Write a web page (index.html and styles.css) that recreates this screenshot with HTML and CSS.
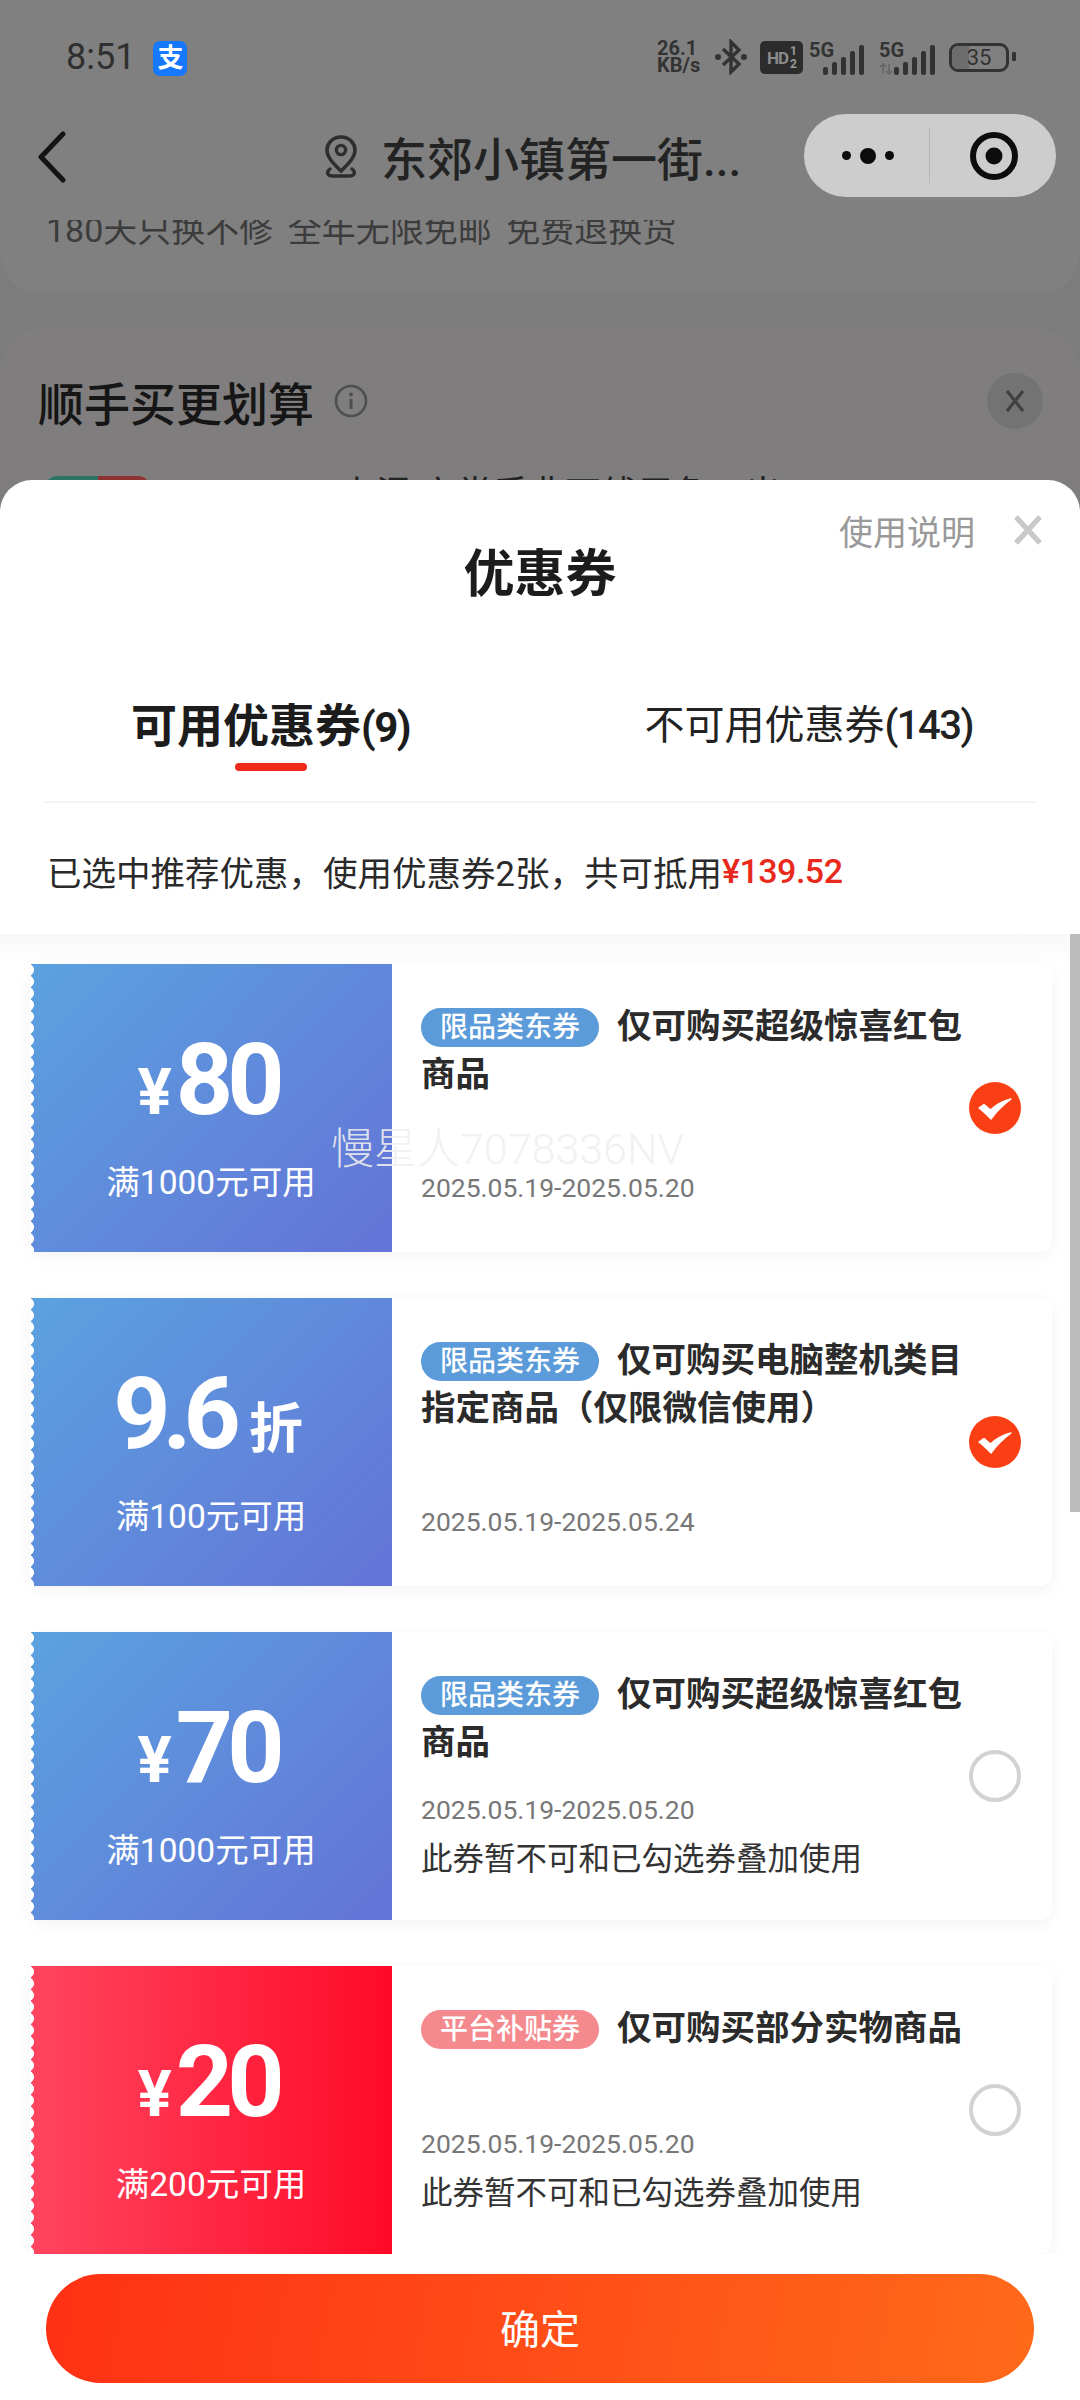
FILE: index.html
```html
<!DOCTYPE html>
<html lang="zh-CN">
<head>
    <meta charset="UTF-8">
    <meta name="viewport" content="width=device-width, initial-scale=1.0">
    <title>优惠券</title>
    <link rel="stylesheet" href="styles.css">
</head>
<body>
<div class="page">

    <!-- dimmed page behind the sheet -->
    <div class="backdrop">
        <div class="status-bar">
            <div class="status-left">
                <span class="clock">8:51</span>
                <span class="pay-icon">支</span>
            </div>
            <div class="status-right">
                <span class="net-speed">26.1<br>KB/s</span>
                <svg class="bt-icon" width="32" height="36" viewBox="0 0 32 36">
                    <path d="M8 10 L24 25 L16 33 V3 L24 11 L8 26" fill="none" stroke="#333" stroke-width="3.4"/>
                    <circle cx="3" cy="18" r="3" fill="#333"/>
                    <circle cx="29" cy="18" r="3" fill="#333"/>
                </svg>
                <span class="hd-badge">HD<span class="hd-sims">1<br>2</span></span>
                <span class="signal">
                    <span class="signal-label">5G</span>
                    <svg width="42" height="30" viewBox="0 0 42 30">
                        <rect x="0" y="22" width="5" height="8" rx="2" fill="#333"/>
                        <rect x="9" y="17" width="5" height="13" rx="2" fill="#333"/>
                        <rect x="18" y="12" width="5" height="18" rx="2" fill="#333"/>
                        <rect x="27" y="6" width="5" height="24" rx="2" fill="#333"/>
                        <rect x="36" y="0" width="5" height="30" rx="2" fill="#333"/>
                    </svg>
                </span>
                <span class="signal signal-second">
                    <span class="signal-label">5G</span>
                    <svg width="56" height="30" viewBox="0 0 56 30">
                        <path d="M4 29 V19 M1 22 L4 19 L7 22 M10 19 V29 M7 26 L10 29 L13 26" fill="none" stroke="#666" stroke-width="1.6"/>
                        <rect x="15" y="22" width="5" height="8" rx="2" fill="#333"/>
                        <rect x="24" y="17" width="5" height="13" rx="2" fill="#333"/>
                        <rect x="33" y="12" width="5" height="18" rx="2" fill="#333"/>
                        <rect x="42" y="6" width="5" height="24" rx="2" fill="#333"/>
                        <rect x="51" y="0" width="5" height="30" rx="2" fill="#333"/>
                    </svg>
                </span>
                <span class="battery"><span class="battery-level"></span><span class="battery-text">35</span></span>
                <span class="battery-tip"></span>
            </div>
        </div>

        <div class="nav-bar">
            <svg class="back-icon" width="30" height="52" viewBox="0 0 30 52">
                <path d="M26 3 L4 26 L26 49" fill="none" stroke="#141414" stroke-width="5" stroke-linecap="round" stroke-linejoin="round"/>
            </svg>
            <div class="nav-title">
                <svg width="36" height="44" viewBox="0 0 36 44">
                    <path d="M18 3 C9 3 4 10 4 16 C4 24 12 31 18 37 C24 31 32 24 32 16 C32 10 27 3 18 3 Z" fill="none" stroke="#2e2e2e" stroke-width="3.6"/>
                    <circle cx="18" cy="16" r="4.6" fill="none" stroke="#2e2e2e" stroke-width="3.4"/>
                    <path d="M7 35 C3 38 4 42 10 42 H26 C32 42 33 38 29 35" fill="none" stroke="#2e2e2e" stroke-width="3.4" stroke-linecap="round"/>
                </svg>
                <span>东郊小镇第一街...</span>
            </div>
            <div class="capsule">
                <div class="capsule-more">
                    <i class="dot"></i><i class="dot dot-big"></i><i class="dot"></i>
                </div>
                <div class="capsule-line"></div>
                <div class="capsule-close">
                    <svg width="52" height="52" viewBox="0 0 52 52">
                        <circle cx="26" cy="26" r="21" fill="none" stroke="#0c0c0c" stroke-width="6"/>
                        <circle cx="26" cy="26" r="8.5" fill="#0c0c0c"/>
                    </svg>
                </div>
            </div>
        </div>

        <div class="store-card">
            <p class="store-perks">180天只换不修 全年无限免邮 免费退换货</p>
        </div>

        <div class="upsell-card">
            <div class="upsell-head">
                <span class="upsell-title">顺手买更划算</span>
                <svg class="info-icon" width="34" height="34" viewBox="0 0 34 34">
                    <circle cx="17" cy="17" r="15" fill="none" stroke="#4e4e4e" stroke-width="2.6"/>
                    <circle cx="17" cy="10.5" r="2" fill="#4e4e4e"/>
                    <path d="M17 15 V25" stroke="#4e4e4e" stroke-width="3"/>
                </svg>
                <span class="upsell-close">
                    <svg width="22" height="26" viewBox="0 0 22 26">
                        <path d="M3 3 L19 23 M19 3 L3 23" stroke="#3f3f3f" stroke-width="3"/>
                    </svg>
                </span>
            </div>
            <div class="upsell-item">
                <div class="upsell-thumb"><i></i><i></i></div>
                <span class="upsell-name">上混 六党手非丁线用色一出</span>
            </div>
        </div>
    </div>

    <!-- coupon sheet -->
    <div class="sheet">
        <div class="sheet-head">
            <h1 class="sheet-title">优惠券</h1>
            <div class="sheet-actions">
                <span class="sheet-help">使用说明</span>
                <svg width="28" height="30" viewBox="0 0 28 30">
                    <path d="M2 2 L26 28 M26 2 L2 28" stroke="#c9c9c9" stroke-width="5.4"/>
                </svg>
            </div>
        </div>

        <div class="tabs">
            <div class="tab tab-active">
                <span>可用优惠券<span class="tab-count">(9)</span></span>
                <i class="tab-line"></i>
            </div>
            <div class="tab">
                <span>不可用优惠券<span class="tab-count">(143)</span></span>
            </div>
        </div>

        <p class="summary">已选中推荐优惠，使用优惠券2张，共可抵用<span class="summary-money">¥139.52</span></p>

        <div class="coupon-list">
            <div class="coupon">
                <div class="coupon-left">
                    <div class="amount"><span class="yen">¥</span><span class="num">80</span></div>
                    <div class="limit">满1000元可用</div>
                </div>
                <div class="coupon-right">
                    <div class="coupon-info">
                        <div class="coupon-name"><span class="badge">限品类东券</span>仅可购买超级惊喜红包商品</div>
                        <div class="coupon-meta">
                            <div class="coupon-date">2025.05.19-2025.05.20</div>
                        </div>
                    </div>
                    <svg class="check" width="52" height="52" viewBox="0 0 52 52">
                        <circle cx="26" cy="26" r="26" fill="#fb3f14"/>
                        <path d="M10 26 L15 22.5 L21.5 28 C27 23 34 19 42 17 C34 23 27 30 22 37 C18 33 14 29 10 26 Z" fill="#fff" stroke="#fff" stroke-width="1.4" stroke-linejoin="round"/>
                    </svg>
                </div>
            </div>

            <div class="coupon">
                <div class="coupon-left">
                    <div class="amount"><span class="num num-rate">9.6</span><span class="discount">折</span></div>
                    <div class="limit">满100元可用</div>
                </div>
                <div class="coupon-right">
                    <div class="coupon-info">
                        <div class="coupon-name"><span class="badge">限品类东券</span>仅可购买电脑整机类目指定商品（仅限微信使用）</div>
                        <div class="coupon-meta">
                            <div class="coupon-date">2025.05.19-2025.05.24</div>
                        </div>
                    </div>
                    <svg class="check" width="52" height="52" viewBox="0 0 52 52">
                        <circle cx="26" cy="26" r="26" fill="#fb3f14"/>
                        <path d="M10 26 L15 22.5 L21.5 28 C27 23 34 19 42 17 C34 23 27 30 22 37 C18 33 14 29 10 26 Z" fill="#fff" stroke="#fff" stroke-width="1.4" stroke-linejoin="round"/>
                    </svg>
                </div>
            </div>

            <div class="coupon">
                <div class="coupon-left">
                    <div class="amount"><span class="yen">¥</span><span class="num">70</span></div>
                    <div class="limit">满1000元可用</div>
                </div>
                <div class="coupon-right">
                    <div class="coupon-info">
                        <div class="coupon-name"><span class="badge">限品类东券</span>仅可购买超级惊喜红包商品</div>
                        <div class="coupon-meta">
                            <div class="coupon-date">2025.05.19-2025.05.20</div>
                            <div class="coupon-note">此券暂不可和已勾选券叠加使用</div>
                        </div>
                    </div>
                    <span class="radio"></span>
                </div>
            </div>

            <div class="coupon coupon-red">
                <div class="coupon-left">
                    <div class="amount"><span class="yen">¥</span><span class="num">20</span></div>
                    <div class="limit">满200元可用</div>
                </div>
                <div class="coupon-right">
                    <div class="coupon-info">
                        <div class="coupon-name"><span class="badge">平台补贴券</span>仅可购买部分实物商品</div>
                        <div class="coupon-meta">
                            <div class="coupon-date">2025.05.19-2025.05.20</div>
                            <div class="coupon-note">此券暂不可和已勾选券叠加使用</div>
                        </div>
                    </div>
                    <span class="radio"></span>
                </div>
            </div>

            <div class="scrollbar"></div>
        </div>

        <div class="sheet-footer">
            <button class="confirm-btn">确定</button>
        </div>
    </div>

    <div class="watermark">慢星人7078336NV</div>
</div>
</body>
</html>
```

FILE: styles.css
```css
* {
    box-sizing: border-box;
}

body {
    margin: 0;
    font-family: Roboto, "Noto Sans CJK SC", sans-serif;
    color: #333;
    background: #7e7e7e;
}

.page {
    position: relative;
    width: 1080px;
    height: 2400px;
    overflow: hidden;
}

/* backdrop */
.backdrop {
    height: 512px;
    overflow: hidden;
    background: #7c7c7c;
}

.status-bar {
    display: flex;
    justify-content: space-between;
    height: 114px;
    padding: 37px 64px 0 66px;
    background: #808080;
}

.status-left {
    display: flex;
    align-items: flex-start;
    gap: 18px;
}

.clock {
    margin-top: 1px;
    font-size: 36px;
    line-height: 38px;
    color: #2f2f2f;
}

.pay-icon {
    width: 34px;
    height: 35px;
    margin-top: 4px;
    border-radius: 7px;
    background: #1677ff;
    color: #fff;
    font-size: 26px;
    font-weight: 700;
    line-height: 34px;
    text-align: center;
}

.status-right {
    display: flex;
    align-items: flex-start;
    color: #333;
}

.net-speed {
    width: 58px;
    margin-top: 3px;
    font-size: 20px;
    font-weight: 700;
    line-height: 17px;
}

.bt-icon {
    margin: 2px 0 0 0;
}

.hd-badge {
    display: flex;
    align-items: center;
    justify-content: center;
    width: 43px;
    height: 33px;
    margin: 4px 0 0 13px;
    border-radius: 5px;
    background: #2c2c2c;
    color: #8a8a8a;
    font-size: 17px;
    font-weight: 700;
    letter-spacing: -1px;
}

.hd-sims {
    margin-left: 2px;
    font-size: 12px;
    line-height: 13px;
    text-align: center;
    color: #999;
}

.signal {
    position: relative;
    display: block;
    width: 56px;
    height: 36px;
    margin: 4px 0 0 6px;
    text-align: right;
}

.signal svg {
    position: absolute;
    right: 0;
    bottom: 2px;
    display: block;
}

.signal-label {
    position: absolute;
    left: 0;
    top: 0;
    font-size: 20px;
    font-weight: 700;
    line-height: 18px;
}

.signal-second {
    margin-left: 14px;
}

.battery {
    position: relative;
    display: block;
    width: 60px;
    height: 29px;
    margin: 6px 0 0 14px;
    border: 3px solid #333;
    border-radius: 9px;
    overflow: hidden;
}

.battery-level {
    position: absolute;
    left: 0;
    top: 0;
    bottom: 0;
    width: 32%;
    background: #6d6d6d;
}

.battery-text {
    position: relative;
    display: block;
    font-size: 22px;
    line-height: 23px;
    text-align: center;
    color: #333;
}

.battery-tip {
    width: 4px;
    height: 9px;
    margin: 15px 0 0 3px;
    border-radius: 1px;
    background: #333;
}

.nav-bar {
    position: relative;
    display: flex;
    align-items: flex-start;
    height: 106px;
    padding: 0 24px 0 37px;
    background: #808080;
    z-index: 1;
}

.back-icon {
    margin-top: 17px;
}

.nav-title {
    display: flex;
    align-items: center;
    gap: 22px;
    height: 83px;
    margin-left: 256px;
    font-size: 46px;
    font-weight: 500;
    color: #232323;
}

.capsule {
    display: flex;
    align-items: center;
    width: 252px;
    height: 83px;
    margin-left: auto;
    border-radius: 42px;
    background: #cdcdcd;
}

.capsule-more {
    display: flex;
    align-items: center;
    justify-content: flex-end;
    gap: 9px;
    width: 90px;
}

.dot {
    width: 9px;
    height: 9px;
    border-radius: 50%;
    background: #0c0c0c;
}

.dot-big {
    width: 16px;
    height: 16px;
}

.capsule-line {
    width: 1px;
    height: 55px;
    margin-left: 35px;
    background: #b5b5b5;
}

.capsule-close {
    display: flex;
    margin-left: 38px;
}

.store-card {
    height: 73px;
    border-radius: 0 0 40px 40px;
    background: #808080;
    overflow: hidden;
}

.store-perks {
    margin: -13px 0 0 46px;
    font-size: 34px;
    line-height: 46px;
    word-spacing: 6px;
    color: #3c3c3c;
}

.upsell-card {
    height: 260px;
    margin-top: 35px;
    padding: 45px 37px 0 38px;
    border-radius: 40px 40px 0 0;
    background: #7f7d7d;
}

.upsell-head {
    display: flex;
    align-items: center;
    height: 56px;
}

.upsell-title {
    font-size: 46px;
    font-weight: 500;
    color: #161616;
}

.info-icon {
    margin-left: 20px;
}

.upsell-close {
    display: flex;
    align-items: center;
    justify-content: center;
    width: 56px;
    height: 56px;
    margin-left: auto;
    border-radius: 50%;
    background: #737373;
}

.upsell-item {
    display: flex;
    margin-top: 47px;
}

.upsell-thumb {
    display: flex;
    width: 105px;
    height: 40px;
    margin-left: 7px;
    border-radius: 12px 12px 0 0;
    overflow: hidden;
}

.upsell-thumb i {
    flex: 1;
    background: #2c7565;
}

.upsell-thumb i + i {
    background: #8f3232;
}

.upsell-name {
    margin: -6px 0 0 190px;
    font-size: 36px;
    line-height: 50px;
    color: #222;
}

/* sheet */
.sheet {
    position: relative;
    height: 1920px;
    margin-top: -32px;
    border-radius: 32px 32px 0 0;
    background: #fff;
    overflow: hidden;
}

.sheet-head {
    display: grid;
    height: 198px;
}

.sheet-title,
.sheet-actions {
    grid-area: 1 / 1;
}

.sheet-title {
    justify-self: center;
    margin: 60px 0 0;
    font-size: 51px;
    font-weight: 700;
    line-height: 70px;
    color: #1c1c1c;
}

.sheet-actions {
    display: flex;
    align-items: center;
    justify-self: end;
    align-self: start;
    gap: 39px;
    height: 40px;
    margin: 30px 38px 0 0;
}

.sheet-help {
    font-size: 34px;
    color: #999;
}

.tabs {
    display: flex;
    justify-content: space-between;
    height: 125px;
    margin: 0 45px;
    padding: 18px 62px 0 86px;
    border-bottom: 2px solid #f4f4f4;
}

.tab {
    display: flex;
    flex-direction: column;
    align-items: center;
    font-size: 40px;
    line-height: 60px;
    color: #222;
}

.tab-count {
    font-weight: 500;
    letter-spacing: -1.5px;
}

.tab-active {
    font-size: 46px;
    font-weight: 700;
    color: #1c1c1c;
}

.tab-active .tab-count {
    font-size: 42px;
    font-weight: 700;
}

.tab-line {
    width: 72px;
    height: 8px;
    margin-top: 5px;
    border-radius: 4px;
    background: #ee2a1a;
}

.summary {
    display: flex;
    align-items: center;
    height: 131px;
    margin: 0;
    padding: 4px 0 0 47px;
    font-size: 34.5px;
    color: #2a2a2a;
}

.summary-money {
    font-size: 34px;
    font-weight: 500;
    letter-spacing: -0.5px;
    color: #e8291c;
}

.coupon-list {
    position: relative;
    height: 1320px;
    padding: 30px 28px 0 30px;
    background: linear-gradient(#f8f8f8, #fff 30px);
    overflow: hidden;
}

.scrollbar {
    position: absolute;
    right: 0;
    top: 0;
    width: 10px;
    height: 578px;
    background: #bcbcbc;
}

.coupon {
    display: flex;
    height: 288px;
    margin-bottom: 46px;
    border-radius: 12px;
    background: #fff;
    box-shadow: 0 4px 16px rgba(0, 0, 0, 0.05);
}

.coupon-left {
    position: relative;
    display: flex;
    flex-direction: column;
    align-items: center;
    width: 362px;
    padding-top: 66px;
    background: linear-gradient(135deg, #5ba2e0, #6473d6);
    color: #fff;
}

/* scalloped ticket edge */
.coupon-left::before {
    content: "";
    position: absolute;
    left: 0;
    top: 0;
    bottom: 0;
    width: 5px;
    background: radial-gradient(circle at -2.5px 50%, #fff 6.2px, transparent 6.6px) 0 0 / 5px 11.7px repeat-y;
}

.coupon-red .coupon-left {
    background: linear-gradient(90deg, #ff4560, #ff0a26);
}

.amount {
    display: flex;
    align-items: baseline;
    justify-content: center;
    height: 100px;
    padding-right: 6px;
    line-height: 100px;
}

.yen {
    margin-right: 4px;
    font-size: 64px;
    font-weight: 700;
}

.num {
    font-size: 100px;
    font-weight: 700;
    letter-spacing: -6px;
}

.num-rate {
    letter-spacing: -8px;
}

.discount {
    margin-left: 16px;
    font-size: 54px;
    font-weight: 700;
}

.limit {
    margin-top: 31px;
    font-size: 33.5px;
    line-height: 44px;
}

.coupon-right {
    display: flex;
    flex: 1;
    align-items: center;
    padding: 0 31px 0 29px;
}

.coupon-info {
    display: flex;
    flex-direction: column;
    width: 548px;
    height: 100%;
    padding: 38px 0 37px;
}

.coupon-name {
    font-size: 34.5px;
    font-weight: 700;
    line-height: 48px;
    color: #2b2b2b;
}

.badge {
    display: inline-block;
    height: 39px;
    margin-right: 18px;
    padding: 0 19px;
    border-radius: 20px;
    background: #5b9bd9;
    color: #fff;
    font-size: 28px;
    font-weight: 500;
    line-height: 39px;
    vertical-align: 1px;
}

.coupon-red .badge {
    background: #f58a8e;
}

.coupon-meta {
    margin-top: auto;
}

.coupon-date {
    margin-bottom: 9px;
    font-size: 26.5px;
    line-height: 36px;
    color: #777;
}

.coupon-note {
    margin-top: 2px;
    font-size: 31.5px;
    line-height: 46px;
    color: #333;
}

.check {
    flex: none;
}

.radio {
    flex: none;
    width: 52px;
    height: 52px;
    border: 4px solid #d2d2d2;
    border-radius: 50%;
}

.sheet-footer {
    padding: 20px 46px 0;
}

.confirm-btn {
    display: block;
    width: 988px;
    height: 109px;
    padding: 0 0 4px;
    border: none;
    border-radius: 55px;
    background: linear-gradient(100deg, #ff3014, #ff6a1a);
    color: #fff;
    font-family: inherit;
    font-size: 40px;
}

.watermark {
    position: absolute;
    left: 331px;
    top: 1121px;
    font-size: 43px;
    line-height: 56px;
    font-weight: 300;
    color: rgba(240, 240, 240, 0.9);
}
```
